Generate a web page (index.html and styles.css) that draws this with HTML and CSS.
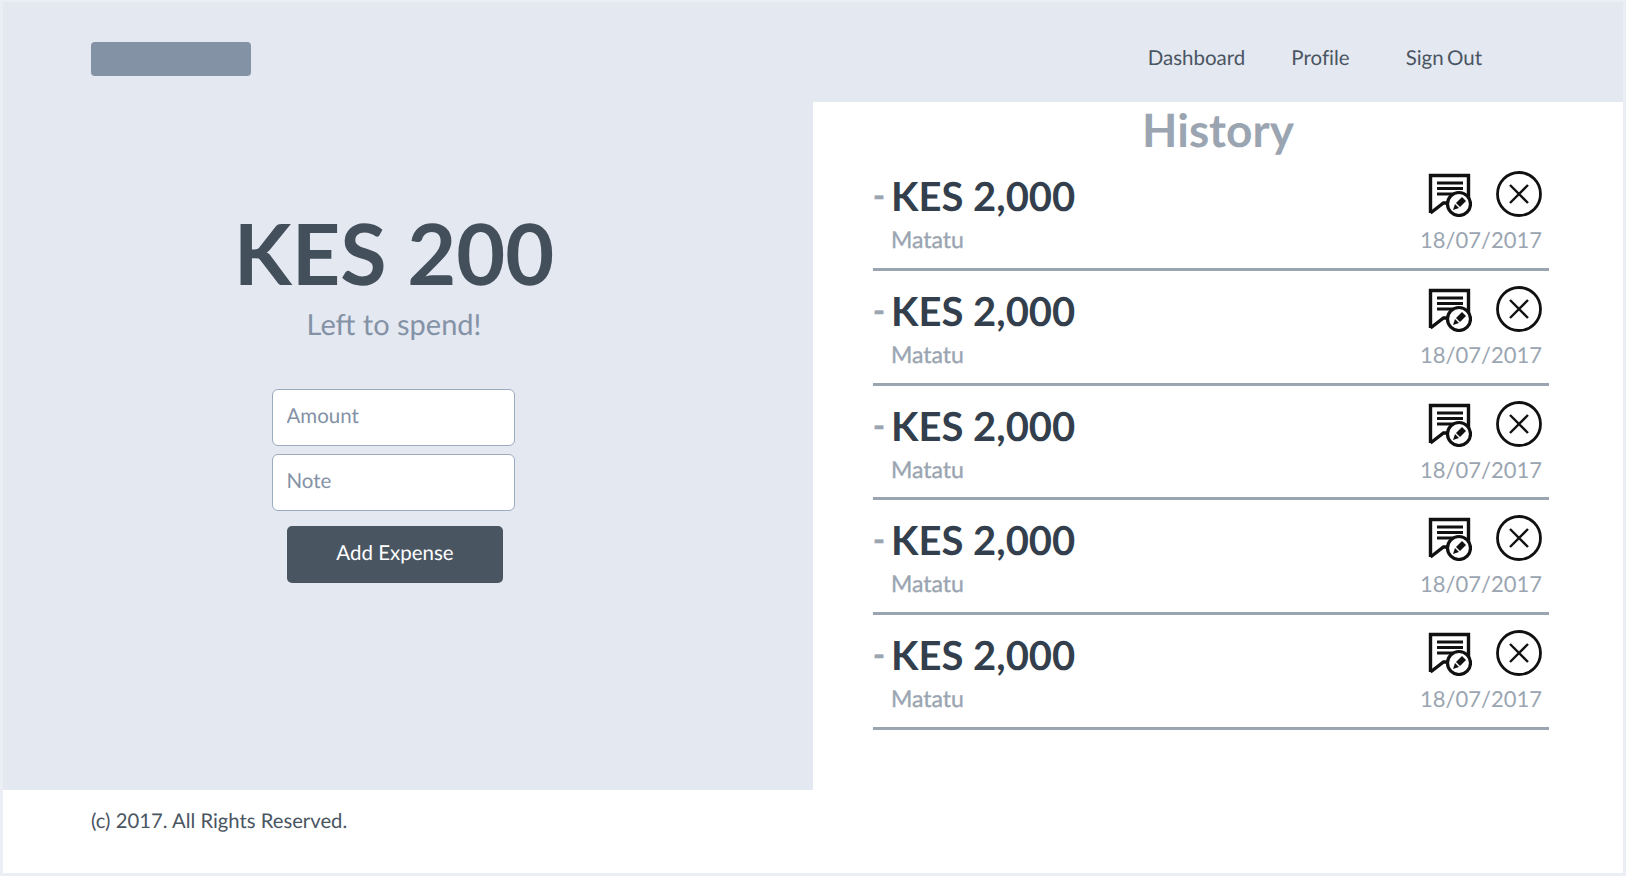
FILE: index.html
```html
<!DOCTYPE html>
<html lang="en">
<head>
    <meta charset="UTF-8">
    <meta name="viewport" content="width=device-width, initial-scale=1.0">
    <title>Expenses</title>
    <link rel="stylesheet" href="styles.css">
</head>
<body>

    <svg class="sprites" width="0" height="0">
        <symbol id="icon-edit" viewBox="0 0 44 44">
            <path d="M2.500 40V2.500h38V30" fill="none" stroke="#111" stroke-width="3.400"/>
            <path d="M2.500 40l13-10h10" fill="none" stroke="#111" stroke-width="3.400"/>
            <path d="M9 10h26M9 15.500h26M9 21h22" fill="none" stroke="#111" stroke-width="3"/>
            <circle cx="31" cy="31" r="11.500" fill="#fff" stroke="#111" stroke-width="3.200"/>
            <path d="M28 30l6-6 4 4-6 6z" fill="#111"/>
            <path d="M27 31l4 4-6 2z" fill="#111"/>
        </symbol>
        <symbol id="icon-close" viewBox="0 0 46 46">
            <circle cx="23" cy="23" r="21.500" fill="none" stroke="#111" stroke-width="2.800"/>
            <path d="M14 14l18 18M32 14L14 32" fill="none" stroke="#111" stroke-width="2.400"/>
        </symbol>
    </svg>

    <div class="page">
        <header class="topbar">
            <div class="logo"></div>
            <nav class="nav">
                <a href="#">Dashboard</a>
                <a href="#">Profile</a>
                <a href="#">Sign Out</a>
            </nav>
        </header>

        <main class="columns">
            <section class="summary">
                <h1 class="balance">KES 200</h1>
                <p class="balance-note">Left to spend!</p>
                <form class="expense-form" action="#">
                    <input class="field" type="text" placeholder="Amount">
                    <input class="field" type="text" placeholder="Note">
                    <button class="btn-add" type="submit">Add Expense</button>
                </form>
            </section>

            <section class="history">
                <h2 class="history-title">History</h2>
                <ul class="history-list">
                    <li class="entry">
                        <div class="entry-main">
                            <div class="entry-amount"><span class="minus">-</span>KES 2,000</div>
                            <div class="entry-note">Matatu</div>
                        </div>
                        <div class="entry-side">
                            <div class="entry-icons">
                                <svg class="icon-edit"><use href="#icon-edit"/></svg>
                                <svg class="icon-close"><use href="#icon-close"/></svg>
                            </div>
                            <div class="entry-date">18/07/2017</div>
                        </div>
                    </li>
                    <li class="entry">
                        <div class="entry-main">
                            <div class="entry-amount"><span class="minus">-</span>KES 2,000</div>
                            <div class="entry-note">Matatu</div>
                        </div>
                        <div class="entry-side">
                            <div class="entry-icons">
                                <svg class="icon-edit"><use href="#icon-edit"/></svg>
                                <svg class="icon-close"><use href="#icon-close"/></svg>
                            </div>
                            <div class="entry-date">18/07/2017</div>
                        </div>
                    </li>
                    <li class="entry">
                        <div class="entry-main">
                            <div class="entry-amount"><span class="minus">-</span>KES 2,000</div>
                            <div class="entry-note">Matatu</div>
                        </div>
                        <div class="entry-side">
                            <div class="entry-icons">
                                <svg class="icon-edit"><use href="#icon-edit"/></svg>
                                <svg class="icon-close"><use href="#icon-close"/></svg>
                            </div>
                            <div class="entry-date">18/07/2017</div>
                        </div>
                    </li>
                    <li class="entry">
                        <div class="entry-main">
                            <div class="entry-amount"><span class="minus">-</span>KES 2,000</div>
                            <div class="entry-note">Matatu</div>
                        </div>
                        <div class="entry-side">
                            <div class="entry-icons">
                                <svg class="icon-edit"><use href="#icon-edit"/></svg>
                                <svg class="icon-close"><use href="#icon-close"/></svg>
                            </div>
                            <div class="entry-date">18/07/2017</div>
                        </div>
                    </li>
                    <li class="entry">
                        <div class="entry-main">
                            <div class="entry-amount"><span class="minus">-</span>KES 2,000</div>
                            <div class="entry-note">Matatu</div>
                        </div>
                        <div class="entry-side">
                            <div class="entry-icons">
                                <svg class="icon-edit"><use href="#icon-edit"/></svg>
                                <svg class="icon-close"><use href="#icon-close"/></svg>
                            </div>
                            <div class="entry-date">18/07/2017</div>
                        </div>
                    </li>
                </ul>
            </section>
        </main>

        <footer class="footer">(c) 2017. All Rights Reserved.</footer>
    </div>

</body>
</html>
```

FILE: styles.css
```css
*{
  box-sizing: border-box;
}

html, body{
  margin: 0;
  height: 100%;
}

body{
  font-family: 'Lato', 'Noto Sans', sans-serif;
  text-rendering: geometricPrecision;
  background: #ebeef5;
  overflow: hidden;
}

.sprites{
  display: block;
  height: 0;
}

.page{
  height: 871px;
  margin: 2px 3px 3px 3px;
  background: #fff;
  display: flex;
  flex-direction: column;
}

.topbar{
  height: 100px;
  background: #e4e8f1;
  display: flex;
  align-items: flex-start;
  justify-content: space-between;
  padding: 40px 141px 0 88px;
}

.logo{
  width: 160px;
  height: 34px;
  background: #8492a6;
  border-radius: 4px;
}

.nav{
  display: flex;
  font-size: 20.5px;
  line-height: 32px;
  font-variant-ligatures: none;
  word-spacing: -2px;
}

.nav a{
  color: #4a5562;
  text-decoration: none;
  margin-left: 46px;
}

.nav a:last-child{
  margin-left: 56px;
}

.columns{
  display: flex;
  height: 688px;
}

.summary{
  width: 810px;
  background: #e4e8f1;
  display: flex;
  flex-direction: column;
  align-items: center;
  padding: 101px 28px 0 0;
}

.balance{
  margin: 0;
  font-size: 84.5px;
  line-height: 100px;
  font-weight: 700;
  color: #444f5c;
}

.balance-note{
  margin: 3px 0 45px;
  font-size: 29px;
  line-height: 38px;
  color: #8492a6;
}

.expense-form{
  display: flex;
  flex-direction: column;
  align-items: center;
}

.field{
  width: 243px;
  height: 57px;
  margin: 0 2px 8px 0;
  padding: 0 14px 4px;
  border: 1px solid #9dabc0;
  border-radius: 6px;
  background: #fff;
  font-family: inherit;
  font-size: 20.5px;
  text-rendering: geometricPrecision;
  color: #3d4852;
}

.field::placeholder{
  color: #8492a6;
  opacity: 1;
}

.btn-add{
  width: 216px;
  height: 57px;
  margin: 7px 0 0 2px;
  padding-bottom: 4px;
  border: 0;
  border-radius: 5px;
  background: #4a5562;
  color: #fff;
  font-family: inherit;
  font-size: 20.5px;
  text-rendering: geometricPrecision;
}

.history{
  flex: 1;
  padding: 0 74px 0 60px;
}

.history-title{
  margin: 0 0 2px;
  padding: 4px 0 0 14px;
  text-align: center;
  font-size: 46px;
  line-height: 48px;
  font-weight: 700;
  color: #9aa5b1;
}

.history-list{
  list-style: none;
  margin: 0;
  padding: 0;
}

.entry{
  height: 114.8px;
  border-bottom: 3px solid #9aa5b1;
  display: flex;
  justify-content: space-between;
  padding: 14px 7px 0 0;
}

.entry-amount{
  font-size: 40px;
  line-height: 52px;
  font-weight: 700;
  color: #333f4d;
}

.minus{
  display: inline-block;
  width: 18px;
  font-size: 32px;
  line-height: 0;
  vertical-align: 4px;
  -webkit-text-stroke: 0.5px #9aa5b1;
  color: #9aa5b1;
}

.entry-note{
  margin-top: 2px;
  padding-left: 18px;
  font-size: 23px;
  line-height: 30px;
  -webkit-text-stroke: 0.35px #9aa5b1;
  color: #9aa5b1;
}

.entry-side{
  display: flex;
  flex-direction: column;
  align-items: flex-end;
}

.entry-icons{
  display: flex;
  align-items: center;
  gap: 24px;
  height: 48px;
}

.icon-edit{
  width: 44px;
  height: 44px;
  margin-top: 2px;
}

.icon-close{
  width: 46px;
  height: 46px;
}

.entry-date{
  margin-top: 7px;
  font-size: 22px;
  line-height: 30px;
  color: #9aa5b1;
}

.footer{
  flex: 1;
  padding: 18px 0 0 88px;
  font-size: 20.25px;
  line-height: 26px;
  color: #4a5562;
}
```
